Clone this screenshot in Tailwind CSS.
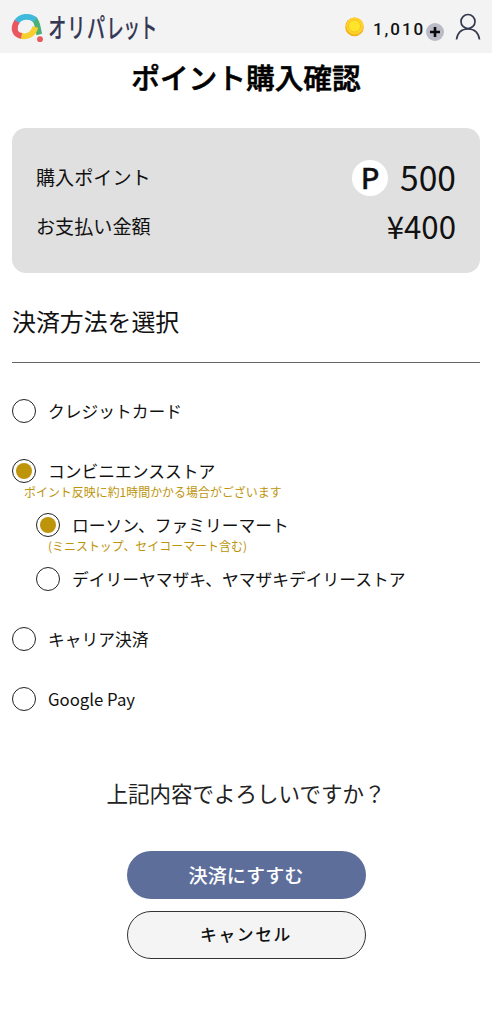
<!DOCTYPE html>
<html lang="ja">
<head>
<meta charset="utf-8">
<title>ポイント購入確認</title>
<script src="https://cdn.jsdelivr.net/npm/@tailwindcss/browser@4"></script>
</head>
<body class="h-[1024px] overflow-hidden bg-white font-['Noto_Sans_CJK_JP',sans-serif] text-[#111]">
<header class="flex h-[53px] items-start justify-between bg-[#f3f3f3]">
  <svg class="h-[53px] w-[170px]" viewBox="0 0 170 53" fill="none">
    <g stroke-width="5.800">
      <path d="M33.800 18.800C38 22 37.500 28 39.300 34.500" stroke="#4bb078"/>
      <path d="M19.500 35.300C26 38 33.500 35 35.300 27" stroke="#f6cf2c"/>
      <path d="M16.300 22.500C20 16 30 15 35 20" stroke="#3fb9dc"/>
      <path d="M21.500 35.900C14 34.500 13 27.500 17 21.500" stroke="#e9575f"/>
    </g>
    <circle cx="40" cy="39.200" r="2.900" fill="#e9575f"/>
    <g font-size="27" font-weight="500" fill="#343754" stroke="#343754" stroke-width=".2">
      <text transform="translate(48.300 37.500) scale(.67 1)">オ</text>
      <text transform="translate(67.200 37.500) scale(.67 1)">リ</text>
      <text transform="translate(87 37.500) scale(.67 1)">パ</text>
      <text transform="translate(106.500 37.500) scale(.64 1)">レ</text>
      <text transform="translate(123.300 37.500) scale(.62 1)">ッ</text>
      <text transform="translate(139.800 37.500) scale(.65 1)">ト</text>
    </g>
  </svg>
  <div class="flex h-[53px] items-start">
    <svg class="mt-[16px] size-[21px]" viewBox="0 0 21 21">
      <circle cx="10.500" cy="10.900" r="9.300" fill="#f4ad1b"/>
      <circle cx="10.800" cy="10" r="8.600" fill="#ffd42a"/>
      <circle cx="10.500" cy="10" r="6" fill="#ffe52a" stroke="#f4b92a" stroke-width=".8"/>
    </svg>
    <span class="ml-[8px] mt-[18px] w-[53px] font-['Roboto',sans-serif] text-[17px] font-medium leading-[22px] tracking-[1.950px] whitespace-nowrap">1,010</span>
    <svg class="mt-[23px] size-[18px]" viewBox="0 0 18 18"><circle cx="9" cy="9" r="9" fill="#bbbbc8"/><path d="M9 4v10M4 9h10" stroke="#08080d" stroke-width="2.600"/></svg>
    <svg class="ml-[11px] mr-[11px] mt-[13px] h-[28px] w-[26px]" viewBox="0 0 26 28" fill="none" stroke="#34384f" stroke-width="1.700"><circle cx="13" cy="8.500" r="7"/><path d="M1.500 26.500C2.500 19.500 7 16 13 16S23.500 19.500 24.500 26.500"/></svg>
  </div>
</header>
<main class="px-3">
  <h1 class="h-[75px] pt-[2px] text-center text-[28.700px] font-medium leading-[43px] text-black [-webkit-text-stroke:0.6px_black]">ポイント購入確認</h1>
  <section class="h-[145px] rounded-[14px] bg-[#e0e0e0] px-6 pt-[25px]">
    <div class="flex h-[49px] items-center justify-between">
      <span class="text-[19.100px]">購入ポイント</span>
      <span class="flex items-center gap-[12px]"><b class="flex size-9 items-center justify-center rounded-full bg-white text-[28.800px] font-medium leading-none [-webkit-text-stroke:0.3px_#111]">P</b><span class="text-[33.600px]">500</span></span>
    </div>
    <div class="flex h-[49px] items-center justify-between">
      <span class="text-[19.100px]">お支払い金額</span><span class="text-[31.200px]">¥400</span>
    </div>
  </section>
  <h2 class="h-[90px] border-b border-[#666] pt-[30px] text-[23.900px] leading-[36px]">決済方法を選択</h2>
  <div class="flex flex-col pt-[36px] text-[16.750px] leading-6">
    <div class="flex h-[60px] gap-3"><i class="size-6 rounded-full border border-[#222]"></i>クレジットカード</div>
    <div class="flex h-[24px] gap-3"><i class="flex size-6 items-center justify-center rounded-full border border-[#222]"><i class="size-4 rounded-full bg-[#bd940a]"></i></i>コンビニエンスストア</div>
    <p class="h-[30px] pl-3 text-[11.960px] leading-[18px] text-[#bd940a]">ポイント反映に約1時間かかる場合がございます</p>
    <div class="flex flex-col pl-6">
      <div class="flex h-[24px] gap-3"><i class="flex size-6 items-center justify-center rounded-full border border-[#222]"><i class="size-4 rounded-full bg-[#bd940a]"></i></i>ローソン、ファミリーマート</div>
      <p class="h-[30px] pl-3 text-[11.960px] leading-[18px] text-[#bd940a]">(ミニストップ、セイコーマート含む)</p>
      <div class="flex h-[60px] gap-3"><i class="size-6 rounded-full border border-[#222]"></i>デイリーヤマザキ、ヤマザキデイリーストア</div>
    </div>
    <div class="flex h-[60px] gap-3"><i class="size-6 rounded-full border border-[#222]"></i>キャリア決済</div>
    <div class="flex h-[60px] gap-3"><i class="size-6 rounded-full border border-[#222]"></i>Google Pay</div>
  </div>
  <p class="pt-[30px] text-center text-[21.500px] leading-[32px] text-[#222]">上記内容でよろしいですか？</p>
  <div class="mt-[41.500px] flex flex-col items-center gap-3">
    <button class="h-12 w-[239px] rounded-full bg-[#5d6e9b] pt-px text-[19.100px] font-medium text-white">決済にすすむ</button>
    <button class="h-12 w-[239px] rounded-full border border-[#333] bg-[#f4f4f4] pt-px text-[16.800px] font-medium tracking-[1.600px]">キャンセル</button>
  </div>
</main>
</body>
</html>
